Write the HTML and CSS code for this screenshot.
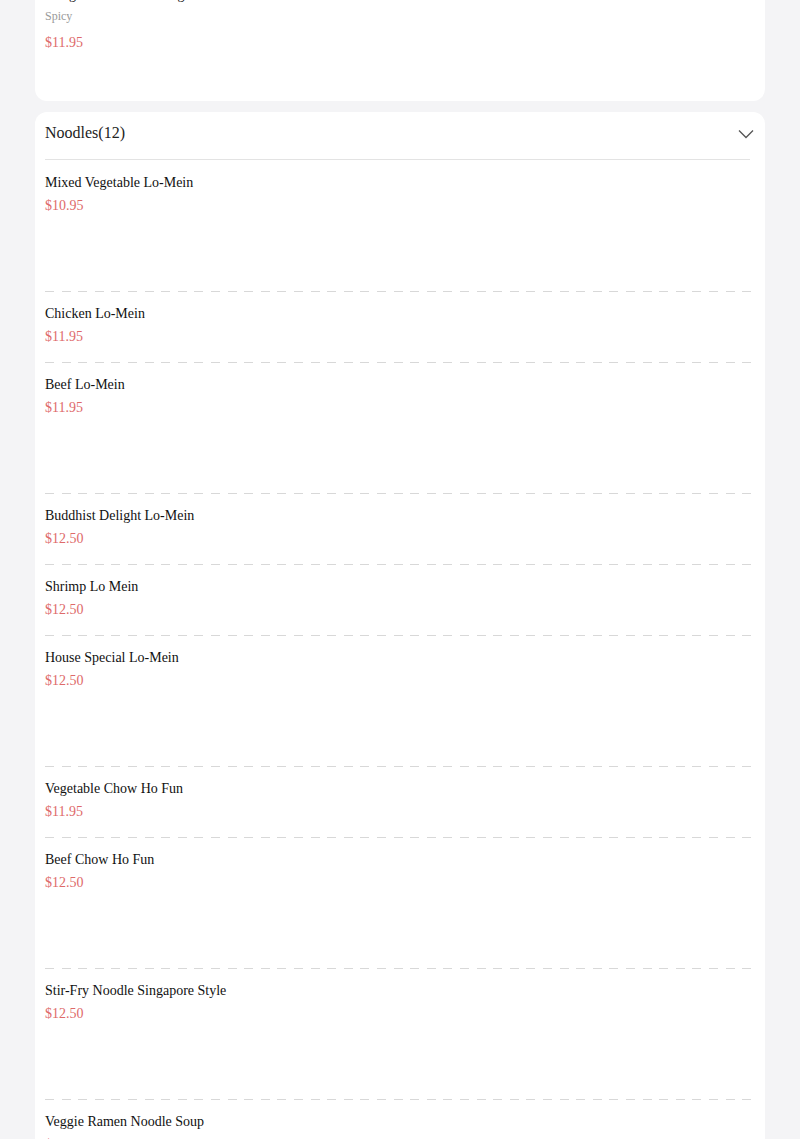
FILE: index.html
```html
<!DOCTYPE html>
<html>
<head>
<meta charset="utf-8">
<link rel="stylesheet" href="styles.css">
</head>
<body>
<div class="page">
  <section class="card card-first">
    <div class="item item-first">
      <div class="name">Kung Pao Chicken Wing</div>
      <div class="tag">Spicy</div>
      <div class="price">$11.95</div>
      <div class="spacer-first"></div>
    </div>
  </section>

  <section class="card">
    <div class="cat-head">
      <span class="cat-title">Noodles(12)</span>
      <svg class="chev" width="16" height="10" viewBox="0 0 16 10"><polyline points="1,1.5 8,8.5 15,1.5" fill="none" stroke="#555" stroke-width="1.3"/></svg>
    </div>
    <div class="item tall"><div class="name">Mixed Vegetable Lo-Mein</div><div class="price">$10.95</div><div class="spacer"></div></div>
    <div class="item"><div class="name">Chicken Lo-Mein</div><div class="price">$11.95</div></div>
    <div class="item tall"><div class="name">Beef Lo-Mein</div><div class="price">$11.95</div><div class="spacer"></div></div>
    <div class="item"><div class="name">Buddhist Delight Lo-Mein</div><div class="price">$12.50</div></div>
    <div class="item"><div class="name">Shrimp Lo Mein</div><div class="price">$12.50</div></div>
    <div class="item tall"><div class="name">House Special Lo-Mein</div><div class="price">$12.50</div><div class="spacer"></div></div>
    <div class="item"><div class="name">Vegetable Chow Ho Fun</div><div class="price">$11.95</div></div>
    <div class="item tall"><div class="name">Beef Chow Ho Fun</div><div class="price">$12.50</div><div class="spacer"></div></div>
    <div class="item tall"><div class="name">Stir-Fry Noodle Singapore Style</div><div class="price">$12.50</div><div class="spacer"></div></div>
    <div class="item"><div class="name">Veggie Ramen Noodle Soup</div><div class="price">$12.50</div></div>
  </section>
</div>
</body>
</html>
```

FILE: styles.css
```css
html, body {
  margin: 0;
  padding: 0;
  background: #f4f4f6;
  font-family: "Liberation Serif", "Times New Roman", serif;
  color: #111;
  overflow: hidden;
}
.page {
  padding: 0 35px;
  display: flex;
  flex-direction: column;
  gap: 11px;
}
.card {
  background: #fff;
  border-radius: 12px;
  padding: 0 10px;
}
.card-first {
  margin-top: -27px;
}
.item {
  padding: 12px 0 16px;
  background-image: repeating-linear-gradient(to right, #d8d8d8 0 9px, transparent 9px 16.6px);
  background-size: 100% 1px;
  background-repeat: no-repeat;
  background-position: left bottom;
}
.cat-head + .item {
  padding-top: 13px;
}
.item:last-child {
  background-image: none;
}
.item-first {
  padding: 12px 0 0;
}
.name {
  font-size: 14px;
  line-height: 20px;
}
.tag {
  font-size: 12px;
  line-height: 16px;
  color: #9a9a9a;
  margin-top: 3px;
}
.price {
  font-size: 14px;
  line-height: 20px;
  color: #de6a6a;
  margin-top: 3px;
}
.item-first .price {
  margin-top: 9px;
}
.spacer {
  height: 60px;
}
.spacer-first {
  height: 48px;
}
.cat-head {
  display: flex;
  align-items: flex-start;
  justify-content: space-between;
  box-sizing: border-box;
  height: 48px;
  padding-top: 11px;
  margin-right: 5px;
  border-bottom: 1px solid #e3e3e3;
}
.cat-title {
  font-size: 16px;
  line-height: 20px;
  color: #222;
}
.chev {
  margin-right: -4px;
  margin-top: 6px;
}
```
